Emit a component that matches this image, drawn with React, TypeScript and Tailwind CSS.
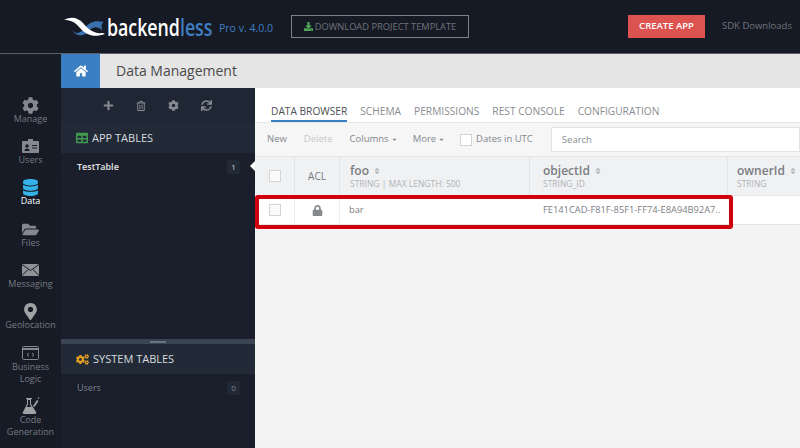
import { FaHome, FaDownload, FaPlus, FaRegTrashAlt, FaCog, FaSync, FaTable, FaCogs, FaLock, FaSort, FaCaretDown, FaDatabase, FaFolderOpen, FaMapMarkerAlt } from "react-icons/fa"

function CodeWindow() {
  return (
    <svg width="17" height="14" viewBox="0 0 17 14" fill="none" stroke="#85888e" strokeWidth="1">
      <rect x="0.5" y="0.5" width="16" height="13" rx="1" />
      <path d="M1 3h15" strokeWidth="2" />
      <path d="M7 7l-2 1.7 2 1.7M10 7l2 1.7-2 1.7" />
    </svg>
  )
}

function IdCard() {
  return (
    <svg width="17" height="14" viewBox="0 0 17 14">
      <path d="M1 2h5V0h5v2h5a1 1 0 0 1 1 1v10a1 1 0 0 1-1 1H1a1 1 0 0 1-1-1V3a1 1 0 0 1 1-1z" fill="#85888e" />
      <circle cx="5" cy="7" r="1.8" fill="#161b26" />
      <path d="M2.5 12c0-2 1-2.6 2.5-2.6s2.5.6 2.5 2.6z" fill="#161b26" />
      <path d="M10 6.5h5M10 9h5" stroke="#161b26" />
    </svg>
  )
}

function Mail() {
  return (
    <svg width="17" height="12" viewBox="0 0 17 12">
      <rect width="17" height="12" fill="#8f9297" />
      <path d="M0 .5l8.5 6 8.5-6M0 11.5l6-6M17 11.5l-6-6" fill="none" stroke="#161b26" />
    </svg>
  )
}

function FlaskPen() {
  return (
    <svg width="18" height="18" viewBox="0 0 18 18">
      <path d="M4 1h6v1H9v5l5 8c.6 1.2 0 2-1 2H2c-1.2 0-1.7-.9-1-2l4-8V2H4z" fill="#a0a2a6" />
      <path d="M6 3h2v4.5l1.5 2.5h-5L6 7.500z" fill="#161b26" />
      <path d="M11 9l4-6 1.500 1-4 6z" fill="#a0a2a6" />
      <circle cx="16.500" cy="1" r="0.800" fill="#a0a2a6" />
    </svg>
  )
}

const railItems = [
  { label: ["Manage"], icon: <FaCog size={17} className="text-[#85888e]" />, h: "h-[41px]" },
  { label: ["Users"], icon: <IdCard />, h: "h-[41px]" },
  { label: ["Data"], icon: <FaDatabase size={17} className="text-[#35b3e8]" />, h: "h-[42px]", active: true },
  { label: ["Files"], icon: <FaFolderOpen size={17} className="text-[#85888e]" />, h: "h-[41px]" },
  { label: ["Messaging"], icon: <Mail />, h: "h-[41px]" },
  { label: ["Geolocation"], icon: <FaMapMarkerAlt size={17} className="text-[#a0a2a6]" />, h: "h-[42px]" },
  { label: ["Business", "Logic"], icon: <CodeWindow />, h: "h-[53px]" },
  { label: ["Code", "Generation"], icon: <FlaskPen />, h: "h-[50px]" },
]

function Logo() {
  return (
    <div className="w-[148px] shrink-0 flex items-center gap-[2px]">
      <svg width="41" height="20" viewBox="0 0 41 20" className="shrink-0">
        <path d="M8 13c4 5 9 3 13-2 4-6 10-8 19-6-3 1-3 6-1 9-5-5-10-5-14 0-5 6-13 6-17-1z" fill="#3a70ad" />
        <path d="M0 3C8-1 14 1 19 6c5 6 10 11 20 10l2 1c-11 4-19 1-25-6C11 5 7 3 0 3z" fill="#ffffff" />
      </svg>
      <span className="inline-block origin-left scale-x-[0.74] text-[24px] leading-none font-semibold font-['Open_Sans',sans-serif] text-white whitespace-nowrap">
        backend<span className="text-[#3f7fc0]">less</span>
      </span>
    </div>
  )
}

function Checkbox() {
  return <div className="w-[12px] h-[12px] border border-[#d2d4d6] bg-[#fafafa]" />
}

export default function App() {
  return (
    <div className="w-[800px] h-[448px] overflow-hidden flex flex-col bg-[#161a24] font-['Open_Sans',sans-serif]">
      {/* top bar */}
      <div className="h-[54px] shrink-0 flex items-center pl-[64px] border-b border-[#5a5e66]">
        <Logo />
        <span className="ml-[7px] mt-[4px] w-[56px] shrink-0 text-[10.500px] text-[#3f7fc0] whitespace-nowrap">Pro v. 4.0.0</span>
        <button className="ml-[16px] w-[178px] shrink-0 h-[23px] border border-[#7d828a] flex items-center justify-center gap-[2px] text-[9.300px] text-[#6f747c] whitespace-nowrap">
          <FaDownload size={9} className="text-[#4fa85a]" />
          DOWNLOAD PROJECT TEMPLATE
        </button>
        <button className="ml-[159px] w-[77px] shrink-0 h-[23px] bg-[#dd5350] text-white text-[9.500px] font-semibold flex items-center justify-center">
          CREATE APP
        </button>
        <span className="ml-[17px] text-[9.500px] text-[#6f747c] whitespace-nowrap">SDK Downloads</span>
      </div>

      <div className="flex-1 flex min-h-0">
        {/* icon rail */}
        <div className="w-[61px] shrink-0 pt-[42px] flex flex-col items-center bg-[#161b26]">
          {railItems.map((item) => (
            <div key={item.label[0]} className={`${item.h} shrink-0 w-full flex flex-col items-center`}>
              <div className="h-[18px] -mb-[1px] flex items-center justify-center">{item.icon}</div>
              {item.label.map((l) => (
                <div key={l} className={`text-[9px] leading-[12px] ${item.active ? "text-white" : "text-[#777a80]"}`}>{l}</div>
              ))}
            </div>
          ))}
        </div>

        <div className="flex-1 min-w-0 flex flex-col">
          {/* title bar */}
          <div className="h-[34px] shrink-0 flex bg-[#e5e5e5]">
            <div className="w-[39px] bg-[#3a7fc1] flex items-center justify-center">
              <FaHome size={14} className="text-white" />
            </div>
            <div className="ml-[16px] text-[14px] leading-[34px] text-[#4a4a4a]">Data Management</div>
          </div>

          <div className="flex-1 flex min-h-0">
            {/* tables sidebar */}
            <div className="w-[194px] shrink-0 flex flex-col bg-[#191e2a]">
              <div className="h-[35px] shrink-0 bg-[#1f2634] flex items-center gap-[22px] pl-[42px] text-[#878b92]">
                <FaPlus size={11} />
                <FaRegTrashAlt size={10} />
                <FaCog size={11} />
                <FaSync size={11} />
              </div>
              <div className="h-[30px] shrink-0 bg-[#222a38] flex items-center pl-[15px] gap-[4px] text-[11px] text-[#d9dade]">
                <FaTable size={12} className="text-[#3f9a4e]" />
                APP TABLES
              </div>
              <div className="h-[28px] shrink-0 relative flex items-center justify-between pl-[16px] pr-[15px] bg-[#1a1f2b]">
                <span className="text-[9px] font-semibold text-[#e3e4e7]">TestTable</span>
                <span className="w-[13px] h-[14px] rounded-[2px] bg-[#212836] text-[8px] text-[#d5d6da] flex items-center justify-center">1</span>
                <div className="absolute right-0 top-[8px] w-0 h-0 border-y-[5px] border-y-transparent border-r-[5px] border-r-white" />
              </div>
              <div className="flex-1" />
              <div className="h-[5px] shrink-0 bg-[#3a4453] flex items-center justify-center">
                <div className="w-[16px] h-[2px] border-y border-[#6a7280]" />
              </div>
              <div className="h-[30px] shrink-0 bg-[#222a38] flex items-center pl-[15px] gap-[4px] text-[11px] text-[#d9dade]">
                <FaCogs size={13} className="text-[#e8a020]" />
                SYSTEM TABLES
              </div>
              <div className="h-[74px] shrink-0 pt-[7px] pl-[16px] pr-[15px] flex items-start justify-between">
                <span className="text-[9px] leading-[14px] text-[#7f838a]">Users</span>
                <span className="w-[13px] h-[14px] rounded-[2px] bg-[#212836] text-[8px] text-[#7f838a] flex items-center justify-center">0</span>
              </div>
            </div>

            {/* main */}
            <div className="flex-1 min-w-0 flex flex-col bg-[#f4f4f5] relative">
              <div className="h-[35px] shrink-0 bg-white border-b border-[#e6e6e6] flex items-end pl-[16px] gap-[13px] text-[10.200px] leading-[14px] text-[#8a8d91]">
                <span className="h-[18px] border-b-2 border-[#3a7fc1] text-[#4c4f54]">DATA BROWSER</span>
                <span className="h-[18px]">SCHEMA</span>
                <span className="h-[18px]">PERMISSIONS</span>
                <span className="h-[18px]">REST CONSOLE</span>
                <span className="h-[18px]">CONFIGURATION</span>
              </div>
              <div className="h-[33px] shrink-0 bg-[#f6f6f7] flex items-center pl-[12px] text-[9.500px] text-[#85888c]">
                <span>New</span>
                <span className="ml-[17px] text-[#c6c8cb]">Delete</span>
                <span className="ml-[17px] flex items-center gap-[2px]">Columns <FaCaretDown size={7} /></span>
                <span className="ml-[15px] flex items-center gap-[2px]">More <FaCaretDown size={7} /></span>
                <div className="ml-[15px] w-[12px] h-[12px] border border-[#d2d4d6] bg-white" />
                <span className="ml-[4px]">Dates in UTC</span>
                <div className="ml-[18px] flex-1 h-[25px] bg-white border border-[#e3e3e3] pl-[10px] leading-[23px] text-[#8a8d91]">Search</div>
              </div>
              <div className="h-[40px] shrink-0 flex bg-[#f0f1f3] border-y border-[#e4e5e7]">
                <div className="w-[40px] shrink-0 flex items-center justify-center border-r border-[#e4e5e7]"><Checkbox /></div>
                <div className="w-[45px] shrink-0 flex items-center justify-center border-r border-[#e4e5e7] text-[10px] text-[#777a7e]">ACL</div>
                <div className="w-[190px] shrink-0 pl-[10px] pt-[6px] border-r border-[#e4e5e7]">
                  <div className="flex items-center gap-[4px] text-[12px] leading-[15px] font-semibold text-[#7a7d82]">foo <FaSort size={8} className="text-[#b5b7ba]" /></div>
                  <div className="text-[8.500px] leading-[12px] text-[#b0b2b5]">STRING | MAX LENGTH: 500</div>
                </div>
                <div className="w-[198px] shrink-0 pl-[13px] pt-[6px] border-r border-[#e4e5e7]">
                  <div className="flex items-center gap-[4px] text-[12px] leading-[15px] font-semibold text-[#7a7d82]">objectId <FaSort size={8} className="text-[#b5b7ba]" /></div>
                  <div className="text-[8.500px] leading-[12px] text-[#b0b2b5]">STRING_ID</div>
                </div>
                <div className="flex-1 pl-[9px] pt-[6px]">
                  <div className="flex items-center gap-[4px] text-[12px] leading-[15px] font-semibold text-[#7a7d82]">ownerId <FaSort size={8} className="text-[#b5b7ba]" /></div>
                  <div className="text-[8.500px] leading-[12px] text-[#b0b2b5]">STRING</div>
                </div>
              </div>
              <div className="h-[29px] shrink-0 flex bg-white border-b border-[#e4e5e7] text-[9.300px] text-[#7d8084]">
                <div className="w-[40px] shrink-0 flex items-center justify-center border-r border-[#efefef]"><Checkbox /></div>
                <div className="w-[45px] shrink-0 pl-[1px] flex items-center justify-center border-r border-[#efefef]"><FaLock size={11} className="text-[#85888c]" /></div>
                <div className="w-[190px] shrink-0 pl-[9px] flex items-center">bar</div>
                <div className="w-[198px] shrink-0 pl-[13px] flex items-center whitespace-nowrap">FE141CAD-F81F-85F1-FF74-E8A94B92A7..</div>
              </div>
              {/* red highlight */}
              <div className="absolute left-0 top-[107px] w-[478px] h-[34px] border-[4px] border-[#d0000f] rounded-[3px]" />
            </div>
          </div>
        </div>
      </div>
    </div>
  )
}
